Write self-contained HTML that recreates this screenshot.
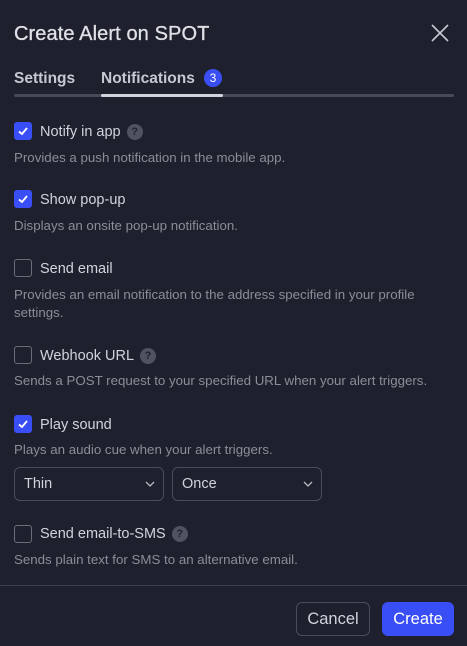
<!DOCTYPE html>
<html><head><style>
*{margin:0;padding:0;box-sizing:border-box}
body{width:467px;height:646px;background:#1e202d;font-family:"Liberation Sans",sans-serif;position:relative;overflow:hidden;color:#d1d4dc}
.a{position:absolute;white-space:nowrap}
.t{font-size:20px;color:#dfe1e7;left:14px;top:23px;letter-spacing:0.1px;-webkit-text-stroke:0.3px #dfe1e7}
.tab{font-size:15.5px;top:70px;color:#c6c9d2;font-weight:bold}
.cb{position:absolute;left:14px;width:18px;height:18px;border:1px solid #6a6d78;border-radius:3px}
.cb.on{background:#3a4ef5;border-color:#3a4ef5}
.lbl{font-size:14.5px;left:40px;color:#d1d4dc}
.d{font-size:13.3px;left:14px;color:#8b8e98;line-height:18px}
.q{display:inline-block;width:16px;height:16px;border-radius:50%;background:#4f5260;color:#1e202d;font-size:11px;font-weight:bold;text-align:center;line-height:16px;vertical-align:1px;margin-left:6px}
.sel{position:absolute;top:467px;height:34px;width:150px;border:1px solid #4a4d59;border-radius:6px;font-size:14.5px;padding:8px 9px;color:#d1d4dc}
.sel svg{position:absolute;right:8px;top:13px}
.btn{position:absolute;top:602px;height:34px;border-radius:6px;font-size:16.5px;text-align:center;line-height:34px}
</style></head><body>
<div class="a t">Create Alert on SPOT</div>
<svg class="a" style="left:431px;top:24px" width="18" height="18"><path d="M1 1L17 17M17 1L1 17" stroke="#c6c9d2" stroke-width="1.6"/></svg>
<div class="a tab" style="left:14px">Settings</div>
<div class="a tab" style="left:101px">Notifications</div>
<div class="a" style="left:204px;top:69px;width:18px;height:18px;border-radius:50%;background:#3a4ef5;color:#fff;font-size:12px;text-align:center;line-height:18px">3</div>
<div class="a" style="left:14px;top:94px;width:440px;height:3px;background:#474a56;border-radius:2px"></div>
<div class="a" style="left:101px;top:94px;width:122px;height:3px;background:#d1d4dc;border-radius:2px"></div>

<div class="cb on" style="top:122px"><svg width="16" height="16"><path d="M4 8.5L7 11L12 5" stroke="#fff" stroke-width="1.8" fill="none"/></svg></div>
<div class="a lbl" style="top:124px">Notify in app<span class="q">?</span></div>
<div class="a d" style="top:149px">Provides a push notification in the mobile app.</div>

<div class="cb on" style="top:190px"><svg width="16" height="16"><path d="M4 8.5L7 11L12 5" stroke="#fff" stroke-width="1.8" fill="none"/></svg></div>
<div class="a lbl" style="top:192px">Show pop-up</div>
<div class="a d" style="top:217px">Displays an onsite pop-up notification.</div>

<div class="cb" style="top:259px"></div>
<div class="a lbl" style="top:261px">Send email</div>
<div class="a d" style="top:286px">Provides an email notification to the address specified in your profile<br>settings.</div>

<div class="cb" style="top:346px"></div>
<div class="a lbl" style="top:348px">Webhook URL<span class="q">?</span></div>
<div class="a d" style="top:372px">Sends a POST request to your specified URL when your alert triggers.</div>

<div class="cb on" style="top:415px"><svg width="16" height="16"><path d="M4 8.5L7 11L12 5" stroke="#fff" stroke-width="1.8" fill="none"/></svg></div>
<div class="a lbl" style="top:417px">Play sound</div>
<div class="a d" style="top:441px">Plays an audio cue when your alert triggers.</div>

<div class="sel" style="left:14px">Thin<svg width="10" height="7"><path d="M1 1L5 5L9 1" stroke="#b8bbc4" stroke-width="1.3" fill="none"/></svg></div>
<div class="sel" style="left:172px">Once<svg width="10" height="7"><path d="M1 1L5 5L9 1" stroke="#b8bbc4" stroke-width="1.3" fill="none"/></svg></div>

<div class="cb" style="top:525px"></div>
<div class="a lbl" style="top:526px">Send email-to-SMS<span class="q">?</span></div>
<div class="a d" style="top:551px">Sends plain text for SMS to an alternative email.</div>

<div class="a" style="left:0;top:585px;width:467px;height:1px;background:#3d404b"></div>
<div class="btn" style="left:296px;width:74px;border:1px solid #4a4d59;color:#d1d4dc;line-height:32px">Cancel</div>
<div class="btn" style="left:382px;width:72px;background:#3a4ef5;color:#fff">Create</div>
</body></html>
